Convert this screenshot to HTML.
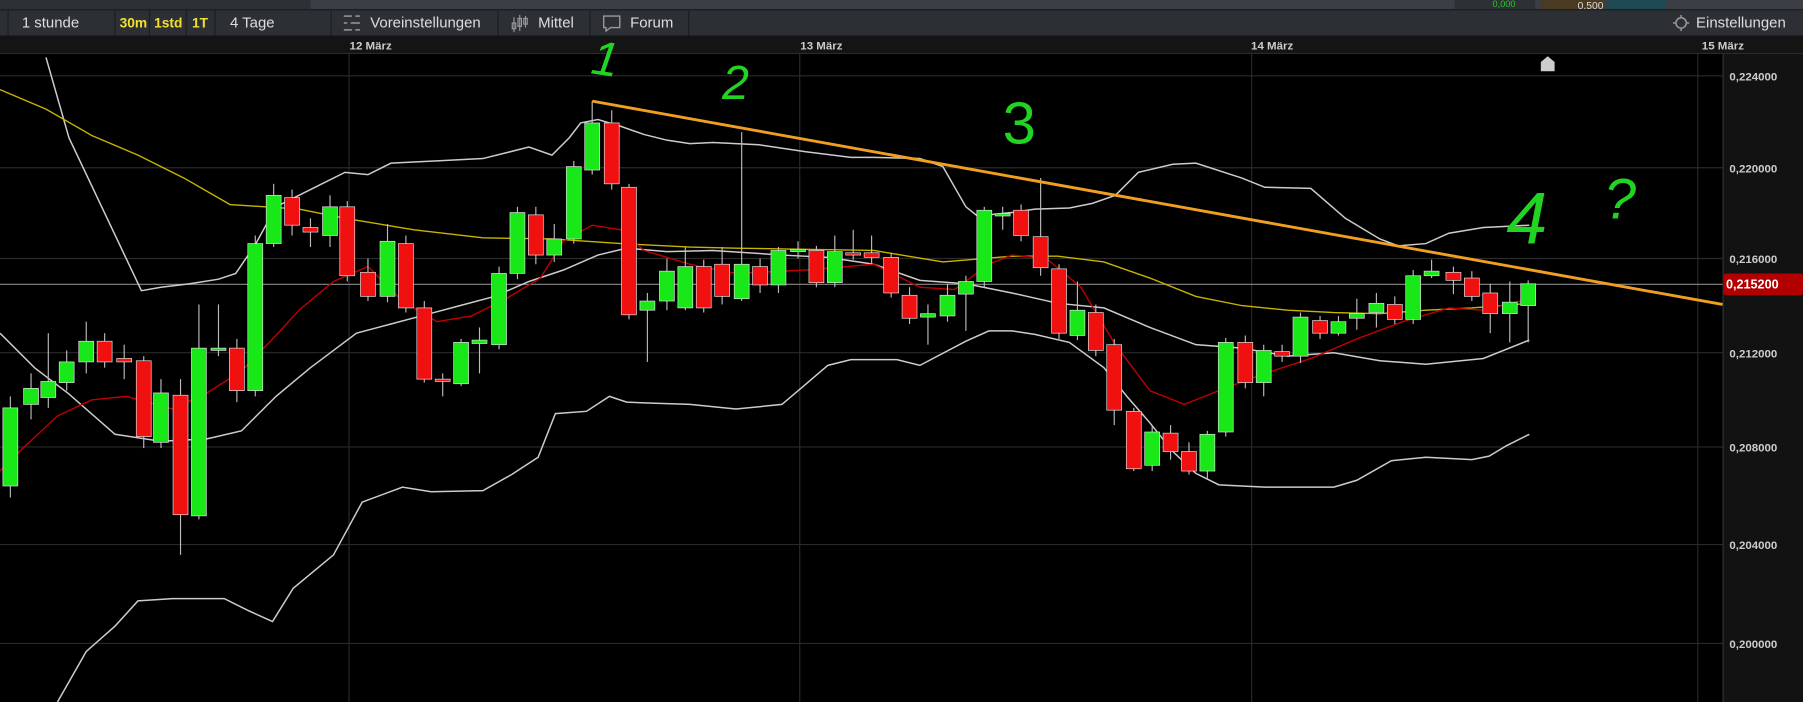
<!DOCTYPE html>
<html><head><meta charset="utf-8"><style>
html,body{margin:0;padding:0;background:#000;overflow:hidden}
svg{display:block}
text{font-family:"Liberation Sans",sans-serif}
</style></head><body>
<svg id="s" width="1803" height="702" viewBox="0 0 1568 611" preserveAspectRatio="none" xmlns="http://www.w3.org/2000/svg">
<rect x="0" y="0" width="1568" height="611" fill="#000"/>
<!-- top strip -->
<rect x="0" y="0" width="1568" height="8" fill="#3b3e44"/>
<rect x="0" y="0" width="270" height="8" fill="#2d3035"/>
<rect x="1265" y="0" width="70" height="8" fill="#2d3035"/>
<rect x="1340" y="0" width="55" height="8" fill="#4a3a22"/>
<rect x="1398" y="0" width="50" height="8" fill="#1f4a55"/>
<rect x="1452" y="0" width="116" height="8" fill="#3b3e44"/>
<text x="1298" y="6" font-size="8" fill="#2c2">0,000</text>
<text x="1372" y="8" font-size="9" fill="#ddd">0,500</text>
<!-- toolbar -->
<rect x="0" y="8" width="1568" height="23" fill="#2c2f34"/>
<line x1="0" y1="8.5" x2="1568" y2="8.5" stroke="#1a1c1f"/>
<g stroke="#1c1e21" stroke-width="1">
<line x1="7" y1="8" x2="7" y2="31"/><line x1="100" y1="8" x2="100" y2="31"/><line x1="130" y1="8" x2="130" y2="31"/><line x1="162" y1="8" x2="162" y2="31"/><line x1="187" y1="8" x2="187" y2="31"/><line x1="288" y1="8" x2="288" y2="31"/><line x1="433" y1="8" x2="433" y2="31"/><line x1="513" y1="8" x2="513" y2="31"/><line x1="599" y1="8" x2="599" y2="31"/>
</g>
<text x="19" y="24" font-size="13" fill="#ddd">1 stunde</text>
<text x="104" y="24" font-size="12" fill="#f2e030" font-weight="bold">30m</text>
<text x="134" y="24" font-size="12" fill="#f2e030" font-weight="bold">1std</text>
<text x="167" y="24" font-size="12" fill="#f2e030" font-weight="bold">1T</text>
<text x="200" y="24" font-size="13" fill="#ddd">4 Tage</text>
<g stroke="#999" stroke-width="1.3"><line x1="299" y1="14" x2="306" y2="14"/><line x1="309" y1="14" x2="313" y2="14"/><line x1="299" y1="20" x2="302" y2="20"/><line x1="305" y1="20" x2="313" y2="20"/><line x1="299" y1="26" x2="306" y2="26"/><line x1="309" y1="26" x2="313" y2="26"/></g>
<text x="322" y="24" font-size="13" fill="#ddd">Voreinstellungen</text>
<g stroke="#999" fill="none" stroke-width="1"><line x1="447" y1="15" x2="447" y2="28"/><rect x="445.5" y="20" width="3" height="5"/><line x1="452" y1="13" x2="452" y2="27"/><rect x="450.5" y="16" width="3" height="7"/><line x1="457" y1="14" x2="457" y2="24"/><rect x="455.5" y="16" width="3" height="5"/></g>
<text x="468" y="24" font-size="13" fill="#ddd">Mittel</text>
<path d="M525 14h14v10h-8l-4 3v-3h-2z" fill="none" stroke="#999" stroke-width="1.2"/>
<text x="548" y="24" font-size="13" fill="#ddd">Forum</text>
<circle cx="1462" cy="20" r="4.5" fill="none" stroke="#999" stroke-width="1.3"/>
<g stroke="#999" stroke-width="1.3"><line x1="1462" y1="13" x2="1462" y2="15"/><line x1="1462" y1="25" x2="1462" y2="27"/><line x1="1455" y1="20" x2="1457" y2="20"/><line x1="1467" y1="20" x2="1469" y2="20"/></g>
<text x="1475" y="24" font-size="13" fill="#ddd">Einstellungen</text>
<!-- date axis -->
<rect x="0" y="31" width="1568" height="16" fill="#141414"/>
<line x1="0" y1="46.5" x2="1568" y2="46.5" stroke="#2a2a2a"/>
<text x="304" y="43" font-size="10" fill="#ccc" font-weight="bold">12 März</text>
<text x="696" y="43" font-size="10" fill="#ccc" font-weight="bold">13 März</text>
<text x="1088" y="43" font-size="10" fill="#ccc" font-weight="bold">14 März</text>
<text x="1480" y="43" font-size="10" fill="#ccc" font-weight="bold">15 März</text>
<!-- right axis -->
<rect x="1498" y="47" width="70" height="564" fill="#121212"/>
<line x1="1498.5" y1="47" x2="1498.5" y2="611" stroke="#333"/>
<g stroke="#2a2a2a" stroke-width="1">
<line x1="0" y1="66" x2="1498" y2="66"/><line x1="0" y1="146" x2="1498" y2="146"/><line x1="0" y1="225" x2="1498" y2="225"/><line x1="0" y1="307" x2="1498" y2="307"/><line x1="0" y1="389" x2="1498" y2="389"/><line x1="0" y1="474" x2="1498" y2="474"/><line x1="0" y1="560" x2="1498" y2="560"/>
<line x1="303.5" y1="47" x2="303.5" y2="611"/><line x1="695.5" y1="47" x2="695.5" y2="611"/><line x1="1088.5" y1="47" x2="1088.5" y2="611"/><line x1="1476.5" y1="47" x2="1476.5" y2="611"/>
</g>
<line x1="0" y1="247.5" x2="1498" y2="247.5" stroke="#888" stroke-width="1"/>
<g font-size="10" fill="#ccc" font-weight="bold">
<text x="1504" y="70">0,224000</text><text x="1504" y="150">0,220000</text><text x="1504" y="229">0,216000</text><text x="1504" y="311">0,212000</text><text x="1504" y="393">0,208000</text><text x="1504" y="478">0,204000</text><text x="1504" y="564">0,200000</text>
</g>
<rect x="1499" y="238" width="69" height="19" rx="2" fill="#b20000"/>
<text x="1501" y="251" font-size="11" fill="#fff" font-weight="bold">0,215200</text>
<path d="M1340 62v-8l6-5 6 5v8z" fill="#ccc"/>
<g id="ind" fill="none" stroke-width="1.3"></g>
<g id="cs"></g>
<g id="top" fill="none"></g>
<g font-family="Liberation Sans,sans-serif" fill="#22d422">
<text x="515" y="66" font-size="42" font-style="italic" transform="rotate(8 530 50)">1</text>
<text x="628" y="86" font-size="42" font-style="italic">2</text>
<text x="872" y="125" font-size="52">3</text>
<text x="1310" y="212" font-size="64" font-style="italic">4</text>
<text x="1395" y="190" font-size="50" font-style="italic">?</text>
</g>
</svg>
<script>
const S='http://www.w3.org/2000/svg';
function pl(pts,col,w,g){const p=document.createElementNS(S,'polyline');p.setAttribute('points',pts);p.setAttribute('stroke',col);p.setAttribute('stroke-width',w);p.setAttribute('fill','none');document.getElementById(g).appendChild(p);}
pl("40,50 60,120 123,253 140,250 165,247 190,243 205,238 222,213 240,180 260,170 280,160 300,150 320,152 340,142 380,140 420,138 460,128 480,135 495,120 505,107 520,104 540,110 560,117 580,122 600,125 620,124 660,126 700,132 740,137 760,137 800,138 820,145 840,180 850,188 880,185 900,182 930,181 950,177 970,170 990,150 1020,143 1040,142 1080,155 1100,163 1140,164 1170,190 1200,208 1216,214 1240,212 1260,203 1290,198 1310,197 1330,196","#ccc",1.3,'ind');
pl("50,611 75,567 100,545 120,523 150,521 195,521 215,531 237,541 255,512 290,483 315,437 350,424 375,428 420,427 445,413 468,398 483,360 510,358 530,345 545,350 570,351 600,352 640,356 680,352 700,335 720,318 740,313 780,313 800,318 840,297 860,288 880,288 900,291 930,298 960,320 980,345 1000,368 1020,393 1040,412 1060,422 1100,424 1160,424 1180,418 1210,401 1240,398 1280,400 1295,397 1310,388 1330,378","#ccc",1.3,'ind');
pl("0,290 30,320 60,343 100,378 140,384 180,382 210,375 240,345 270,320 290,305 310,290 340,282 370,274 400,266 430,258 460,245 490,235 520,222 545,216 580,219 620,218 680,222 720,224 760,230 800,244 840,247 880,255 920,264 960,268 1000,285 1040,300 1080,303 1120,310 1160,307 1200,314 1240,317 1290,312 1330,296","#ccc",1.3,'ind');
pl("0,78 40,95 80,118 120,135 160,155 200,178 260,182 300,190 360,200 420,207 480,208 540,212 600,215 640,216 700,217 760,218 820,228 880,223 920,223 960,228 1000,242 1040,258 1080,266 1120,270 1160,272 1200,273 1240,270 1280,268 1330,264","#c8b400",1.2,'ind');
pl("0,410 20,390 50,362 80,348 110,345 150,356 180,342 210,323 240,292 260,270 290,245 320,232 350,262 380,280 410,275 440,260 470,242 490,210 515,196 540,200 560,218 600,230 640,238 700,235 760,230 800,250 830,252 860,230 880,222 910,225 940,250 970,300 1000,340 1030,352 1060,340 1100,325 1140,312 1180,295 1220,280 1260,268 1290,270 1330,260","#c00000",1.2,'ind');
pl("515,88 1498,265","#f0a020",2.5,'top');
const c=[[9,'G',355,423,345,433],[27,'G',338,352,325,365],[42,'G',332,346,290,355],[58,'G',315,333,305,340],[75,'G',297,315,280,325],[91,'R',297,315,290,320],[108,'R',312,315,300,330],[125,'R',314,380,310,390],[140,'G',342,385,330,390],[157,'R',344,448,330,483],[173,'G',303,449,265,452],[190,'G',303,305,265,310],[206,'R',303,340,295,350],[222,'G',212,340,205,345],[238,'G',170,212,160,215],[254,'R',172,196,165,205],[270,'R',198,202,190,215],[287,'G',180,205,170,215],[302,'R',180,240,175,245],[320,'R',237,258,225,262],[337,'G',210,258,195,263],[353,'R',212,268,205,272],[369,'R',268,330,262,333],[385,'R',330,332,325,345],[401,'G',298,334,295,336],[417,'G',296,299,285,325],[434,'G',238,300,232,304],[450,'G',185,238,180,243],[466,'R',187,222,180,230],[482,'G',208,222,195,228],[499,'G',145,208,140,212],[515,'G',107,148,88,152],[532,'R',107,160,96,165],[547,'R',163,274,160,278],[563,'G',262,270,255,315],[580,'G',236,262,225,270],[596,'G',232,268,215,270],[612,'R',232,268,226,272],[628,'R',230,258,215,265],[645,'G',230,260,115,262],[661,'R',232,248,225,255],[677,'G',218,248,215,255],[694,'G',217,218,210,225],[710,'R',218,246,214,250],[726,'G',219,246,205,250],[742,'R',220,222,200,226],[758,'R',220,224,205,230],[775,'R',224,255,220,259],[791,'R',257,277,250,282],[807,'G',273,276,265,300],[824,'G',257,275,247,280],[840,'G',245,256,240,288],[856,'G',183,245,180,250],[872,'G',186,188,180,200],[888,'R',183,205,178,210],[905,'R',206,233,155,240],[921,'R',234,290,230,295],[937,'G',270,292,245,296],[953,'R',272,305,265,310],[969,'R',300,357,295,370],[986,'R',358,408,355,410],[1002,'G',376,405,370,410],[1018,'R',377,393,370,400],[1034,'R',393,410,385,413],[1050,'G',378,410,375,417],[1066,'G',298,376,294,380],[1083,'R',298,333,292,338],[1099,'G',305,333,300,345],[1115,'R',306,310,300,315],[1131,'G',276,310,272,316],[1148,'R',279,290,275,295],[1164,'G',280,290,275,292],[1180,'G',273,277,260,287],[1197,'G',264,272,255,285],[1213,'R',265,278,258,282],[1229,'G',240,278,235,282],[1245,'G',236,240,226,242],[1264,'R',237,244,232,256],[1280,'R',242,258,236,262],[1296,'R',255,273,247,290],[1313,'G',263,273,245,298],[1329,'G',247,266,244,298]];
let h='';
for(const [x,t,a,b,hi,lo] of c){const col=t=='G'?'#18e818':'#f01010';
h+=`<line x1="${x}" y1="${hi}" x2="${x}" y2="${lo}" stroke="#bbb" stroke-width="1"/>`;
h+=`<rect x="${x-6.5}" y="${a}" width="13" height="${Math.max(b-a,2)}" fill="${col}" stroke="#ddd" stroke-width="0.6"/>`;}
document.getElementById('cs').innerHTML=h;
</script>
</body></html>
